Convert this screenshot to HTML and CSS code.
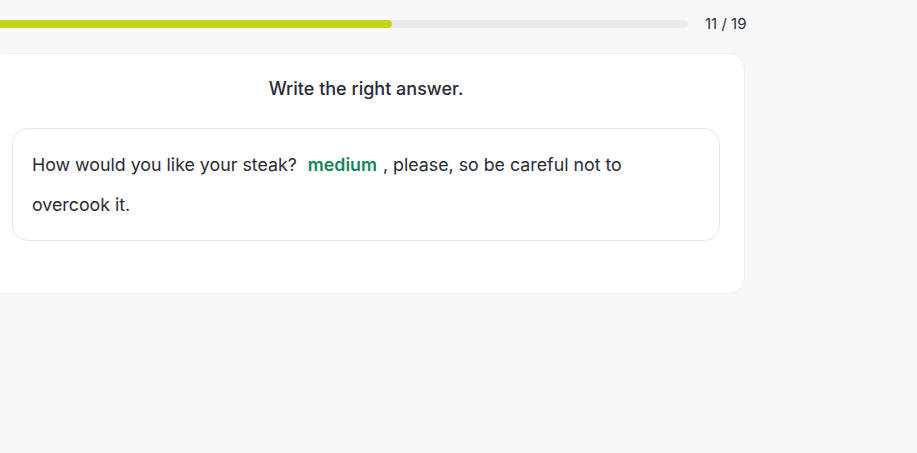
FILE: index.html
```html
<!DOCTYPE html>
<html lang="en">
<head>
<meta charset="utf-8">
<title>Exercise</title>
<link rel="stylesheet" href="styles.css">
</head>
<body>
<div class="wrap">
  <div class="progress-row">
    <div class="track"><div class="fill" style="width:57.89%"></div></div>
    <span class="count">11 / 19</span>
  </div>
  <div class="card">
    <h2 class="title">Write the right answer.</h2>
    <div class="box">
      <p class="sentence">How would you like your steak? <span class="answer">medium</span> , please, so be careful not to overcook it.</p>
    </div>
  </div>
</div>
</body>
</html>
```
FILE: styles.css
```css
* { box-sizing: border-box; }
html, body { margin: 0; padding: 0; }
body {
  background: #f8f8fa;
  font-family: Inter, "Noto Sans", sans-serif;
  color: #2a2a37;
  width: 917px;
  height: 453px;
  overflow: hidden;
}
.wrap {
  margin-left: -14px;
  width: 759px;
  padding-top: 20px;
}
.progress-row {
  display: flex;
  align-items: center;
  gap: 17px;
  height: 8px;
}
.track {
  flex: 1;
  height: 8px;
  border-radius: 4px;
  background: #ebebee;
  overflow: hidden;
}
.fill {
  height: 100%;
  background: #bfd41a;
  border-radius: 4px;
}
.count {
  font-size: 15px;
  color: #2d2d3d;
  line-height: 1;
  white-space: nowrap;
  width: 40px;
  margin-top: -1px;
}
.card {
  margin-top: 25px;
  background: #fff;
  border: 1px solid #f0f0f3;
  border-radius: 16px;
  padding: 20px 24px 52px 25px;
}
.title {
  margin: 0 0 24px;
  text-align: center;
  font-size: 18px;
  font-weight: 500;
  line-height: 30px;
  color: #2a2a37;
}
.box {
  border: 1px solid #e8e8ec;
  border-radius: 16px;
  padding: 16px 20px 15px 19px;
}
.sentence {
  margin: 0;
  font-size: 17.8px;
  line-height: 40px;
  color: #2a2a37;
}
.answer {
  display: inline-block;
  color: #13845a;
  font-weight: 600;
  margin: 0 1px 0 6px;
}
```
